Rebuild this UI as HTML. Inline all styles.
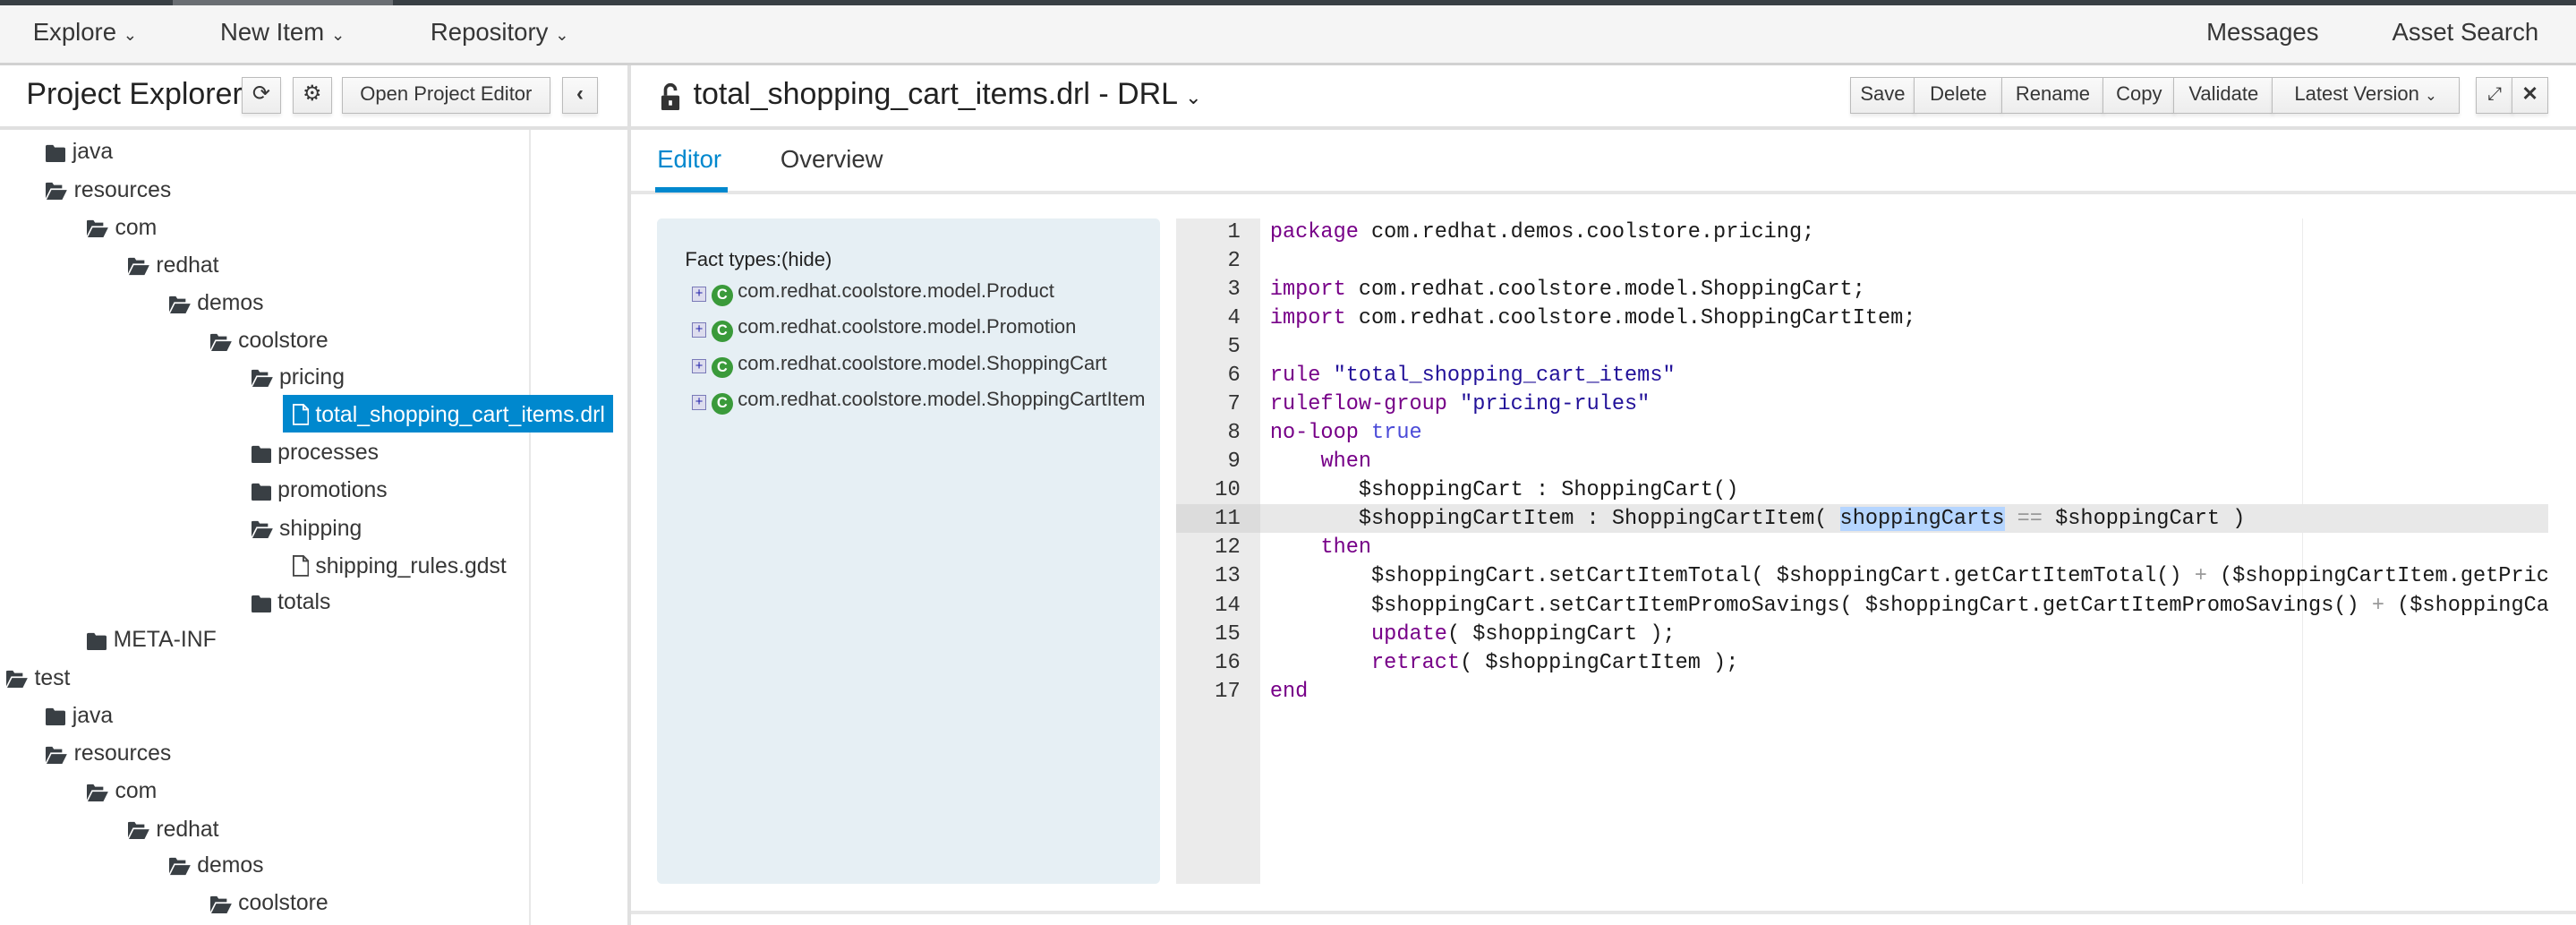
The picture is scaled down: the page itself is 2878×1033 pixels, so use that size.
<!DOCTYPE html>
<html><head><meta charset="utf-8">
<style>
html,body{margin:0;padding:0;}
body{width:2878px;height:1032px;overflow:hidden;background:#fff;}
#w{zoom:1.8355;width:1568px;height:563px;position:relative;font-family:"Liberation Sans",sans-serif;color:#363636;overflow:hidden;}
.a{position:absolute;white-space:nowrap;}
.nav{font-size:15px;top:11px;}
.btn{position:absolute;top:47px;height:22px;border:1px solid #bbb;background:linear-gradient(#fafafa,#ededed);box-sizing:border-box;font-size:12px;line-height:20px;text-align:center;color:#363636;box-shadow:0 2px 2px rgba(0,0,0,.08);}
.t{position:absolute;font-size:13.5px;height:20px;line-height:20px;white-space:nowrap;}
.t svg{vertical-align:-2px;margin-right:4px;}
.code{position:absolute;left:773px;font-family:"Liberation Mono",monospace;font-size:12.85px;white-space:pre;line-height:17.45px;color:#1a1a1a;}
.ln{position:absolute;left:716px;width:39px;text-align:right;font-family:"Liberation Mono",monospace;font-size:13px;line-height:17.45px;color:#333;}
.k{color:#770088}.s{color:#221199}.at{color:#4b4bd8}.o{color:#999}
.sel{background:#b5d5ff}
.fi{position:absolute;left:421px;font-size:12px;white-space:nowrap;}
.fi b{display:inline-block;width:8px;height:8px;border:1px solid #7a7ab8;background:#dde;font-size:8px;line-height:8px;text-align:center;color:#22a;font-weight:normal;vertical-align:0;margin-right:3px;}
.fi i{display:inline-block;width:13px;height:13px;border-radius:50%;background:#3a9a3a;color:#fff;font-style:normal;font-size:9px;line-height:13px;text-align:center;font-weight:bold;margin-right:3px;vertical-align:-1px;}
</style></head><body><div id="w">
<div class="a" style="left:0;top:0;width:1568px;height:3px;background:#393f44"></div>
<div class="a" style="left:105px;top:0;width:134px;height:3px;background:#6a6e73"></div>
<div class="a" style="left:0;top:3px;width:1568px;height:35px;background:#f5f5f5;border-bottom:2px solid #d1d1d1"></div>
<div class="a nav" style="left:20px">Explore <span style="font-size:10px">&#8964;</span></div>
<div class="a nav" style="left:134px">New Item <span style="font-size:10px">&#8964;</span></div>
<div class="a nav" style="left:262px">Repository <span style="font-size:10px">&#8964;</span></div>
<div class="a nav" style="left:1343px">Messages</div>
<div class="a nav" style="left:1456px">Asset Search</div>

<div class="a" style="left:382px;top:40px;width:2px;height:523px;background:#e0e0e0"></div>
<div class="a" style="left:0;top:77px;width:382px;height:2px;background:#e0e0e0"></div>
<div class="a" style="left:16px;top:47px;font-size:18.5px;color:#222">Project Explorer</div>
<div class="btn" style="left:147px;width:24px;font-size:13px">&#10227;</div>
<div class="btn" style="left:178px;width:24px;font-size:13px">&#9881;</div>
<div class="btn" style="left:208px;width:127px">Open Project Editor</div>
<div class="btn" style="left:342px;width:22px;font-size:13px;font-weight:bold">&lsaquo;</div>
<div class="a" style="left:322px;top:79px;width:1px;height:484px;background:#e8e8e8"></div>
<div class="a" style="left:172px;top:240px;width:201px;height:23px;background:#0088ce"></div>

<svg width="0" height="0" style="position:absolute"><defs>
<symbol id="fc" viewBox="0 0 12 11"><path d="M0 1.5Q0 0.5 1 0.5H4.5L5.5 2H11Q12 2 12 3V10Q12 11 11 11H1Q0 11 0 10Z" fill="#393f44"/></symbol>
<symbol id="fo" viewBox="0 0 13 11"><path d="M0 1Q0 0.5 1 0.5H4L5 2H10V4H3L0 10Z" fill="#393f44"/><path d="M3.5 5H13L10 11H0.5Z" fill="#393f44"/></symbol>
<symbol id="ff" viewBox="0 0 10 13"><path d="M0.5 0.5H6.5L9.5 3.5V12.5H0.5Z M6.5 0.5V3.5H9.5" fill="none" stroke="currentColor"/></symbol>
</defs></svg>

<div class="t" style="left:28px;top:83px"><svg width="12" height="11"><use href="#fc"/></svg>java</div>
<div class="t" style="left:28px;top:106px"><svg width="13" height="11"><use href="#fo"/></svg>resources</div>
<div class="t" style="left:53px;top:129px"><svg width="13" height="11"><use href="#fo"/></svg>com</div>
<div class="t" style="left:78px;top:152px"><svg width="13" height="11"><use href="#fo"/></svg>redhat</div>
<div class="t" style="left:103px;top:175px"><svg width="13" height="11"><use href="#fo"/></svg>demos</div>
<div class="t" style="left:128px;top:198px"><svg width="13" height="11"><use href="#fo"/></svg>coolstore</div>
<div class="t" style="left:153px;top:220px"><svg width="13" height="11"><use href="#fo"/></svg>pricing</div>
<div class="t" style="left:178px;top:243px;color:#fff"><svg width="10" height="13" style="color:#fff"><use href="#ff"/></svg>total_shopping_cart_items.drl</div>
<div class="t" style="left:153px;top:266px"><svg width="12" height="11"><use href="#fc"/></svg>processes</div>
<div class="t" style="left:153px;top:289px"><svg width="12" height="11"><use href="#fc"/></svg>promotions</div>
<div class="t" style="left:153px;top:312px"><svg width="13" height="11"><use href="#fo"/></svg>shipping</div>
<div class="t" style="left:178px;top:335px"><svg width="10" height="13" style="color:#444"><use href="#ff"/></svg>shipping_rules.gdst</div>
<div class="t" style="left:153px;top:357px"><svg width="12" height="11"><use href="#fc"/></svg>totals</div>
<div class="t" style="left:53px;top:380px"><svg width="12" height="11"><use href="#fc"/></svg>META-INF</div>
<div class="t" style="left:4px;top:403px"><svg width="13" height="11"><use href="#fo"/></svg>test</div>
<div class="t" style="left:28px;top:426px"><svg width="12" height="11"><use href="#fc"/></svg>java</div>
<div class="t" style="left:28px;top:449px"><svg width="13" height="11"><use href="#fo"/></svg>resources</div>
<div class="t" style="left:53px;top:472px"><svg width="13" height="11"><use href="#fo"/></svg>com</div>
<div class="t" style="left:78px;top:495px"><svg width="13" height="11"><use href="#fo"/></svg>redhat</div>
<div class="t" style="left:103px;top:517px"><svg width="13" height="11"><use href="#fo"/></svg>demos</div>
<div class="t" style="left:128px;top:540px"><svg width="13" height="11"><use href="#fo"/></svg>coolstore</div>

<div class="a" style="left:384px;top:77px;width:1184px;height:2px;background:#e0e0e0"></div>
<svg class="a" style="left:402px;top:50px" width="12" height="17" viewBox="0 0 12 17"><path d="M3 8V4.5A3 3 0 0 1 9 4.5V5" fill="none" stroke="#333" stroke-width="2"/><rect x="0.5" y="8" width="11" height="9" rx="1" fill="#333"/><rect x="5" y="11" width="2" height="3" fill="#fff"/></svg>
<div class="a" style="left:422px;top:47px;font-size:18.5px;color:#222">total_shopping_cart_items.drl - DRL <span style="font-size:12px">&#8964;</span></div>
<div class="btn" style="left:1126px;width:40px">Save</div>
<div class="btn" style="left:1165px;width:54px">Delete</div>
<div class="btn" style="left:1218px;width:63px">Rename</div>
<div class="btn" style="left:1280px;width:44px">Copy</div>
<div class="btn" style="left:1323px;width:61px">Validate</div>
<div class="btn" style="left:1383px;width:114px">Latest Version <span style="font-size:9px">&#8964;</span></div>
<div class="btn" style="left:1507px;width:23px;font-size:11px">&#10530;</div>
<div class="btn" style="left:1529px;width:22px;font-size:12px;font-weight:bold">&#10005;</div>

<div class="a" style="left:400px;top:88px;font-size:15px;color:#0088ce">Editor</div>
<div class="a" style="left:475px;top:88px;font-size:15px;color:#363636">Overview</div>
<div class="a" style="left:384px;top:116px;width:1184px;height:2px;background:#e6e6e6"></div>
<div class="a" style="left:399px;top:114px;width:44px;height:3px;background:#0088ce"></div>

<div class="a" style="left:400px;top:133px;width:306px;height:405px;background:#e6eff4;border-radius:3px"></div>
<div class="a" style="left:417px;top:151px;font-size:12px;color:#222">Fact types:(hide)</div>
<div class="fi" style="top:170px"><b>+</b><i>C</i>com.redhat.coolstore.model.Product</div>
<div class="fi" style="top:192px"><b>+</b><i>C</i>com.redhat.coolstore.model.Promotion</div>
<div class="fi" style="top:214px"><b>+</b><i>C</i>com.redhat.coolstore.model.ShoppingCart</div>
<div class="fi" style="top:236px;width:285px;overflow:hidden"><b>+</b><i>C</i>com.redhat.coolstore.model.ShoppingCartItem</div>

<div class="a" style="left:716px;top:133px;width:51px;height:405px;background:#ebebeb"></div>
<div class="a" style="left:1401px;top:133px;width:1px;height:405px;background:#ececec"></div>
<div class="a" style="left:767px;top:307px;width:784px;height:17px;background:#e8e8e8"></div>
<div class="a" style="left:716px;top:307px;width:51px;height:17px;background:#dcdcdc"></div>
<div class="ln" style="top:133px">1<br>2<br>3<br>4<br>5<br>6<br>7<br>8<br>9<br>10<br>11<br>12<br>13<br>14<br>15<br>16<br>17</div>
<div class="code" style="top:133px;width:778px;overflow:hidden"><span class="k">package</span> com.redhat.demos.coolstore.pricing;

<span class="k">import</span> com.redhat.coolstore.model.ShoppingCart;
<span class="k">import</span> com.redhat.coolstore.model.ShoppingCartItem;

<span class="k">rule</span> <span class="s">"total_shopping_cart_items"</span>
<span class="k">ruleflow-group</span> <span class="s">"pricing-rules"</span>
<span class="k">no-loop</span> <span class="at">true</span>
    <span class="k">when</span>
       $shoppingCart : ShoppingCart()
       $shoppingCartItem : ShoppingCartItem( <span class="sel">shoppingCarts</span> <span class="o">==</span> $shoppingCart )
    <span class="k">then</span>
        $shoppingCart.setCartItemTotal( $shoppingCart.getCartItemTotal() <span class="o">+</span> ($shoppingCartItem.getPrice() * $shoppingCartItem.getQuantity()) );
        $shoppingCart.setCartItemPromoSavings( $shoppingCart.getCartItemPromoSavings() <span class="o">+</span> ($shoppingCartItem.getPromoSavings()) );
        <span class="k">update</span>( $shoppingCart );
        <span class="k">retract</span>( $shoppingCartItem );
<span class="k">end</span></div>
<div class="a" style="left:384px;top:554px;width:1184px;height:2px;background:#e6e6e6"></div>
</div></body></html>
